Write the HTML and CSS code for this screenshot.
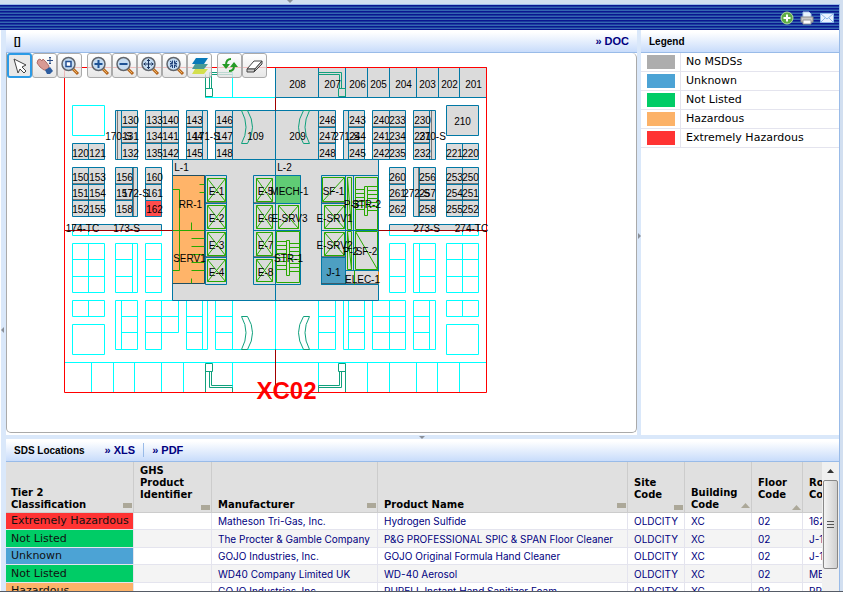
FILE: index.html
```html
<!DOCTYPE html>
<html lang="en">
<head>
<meta charset="utf-8">
<title>SDS Locations</title>
<meta name="viewport" content="width=device-width, initial-scale=1">
<link rel="stylesheet" href="styles.css">
</head>

<body>

<div class="app">
  <i class="handle handle--top"></i>
  <header class="banner">
    <button type="button" class="banner__btn" aria-label="Add">
      <svg width="14" height="14" viewBox="0 0 14 14"><circle cx="7" cy="7" r="6" fill="#5fae45" stroke="#b5dca4"/><path d="M7 3.500V10.500M3.500 7H10.500" stroke="#fff" stroke-width="2"/></svg>
    </button>
    <button type="button" class="banner__btn" aria-label="Print">
      <svg width="14" height="14" viewBox="0 0 14 14"><path d="M3 6V1H9L11 3V6" fill="#e8f2fd" stroke="#a8c8ea"/><path d="M1 6H13V11H1Z" fill="#c9c9c9" stroke="#8c8c8c"/><path d="M3 9H11V13H3Z" fill="#fff" stroke="#999"/></svg>
    </button>
    <button type="button" class="banner__btn" aria-label="Mail">
      <svg width="14" height="14" viewBox="0 0 14 14"><path d="M.5 2.500H13.500V11.500H.5Z" fill="#eaf3ff" stroke="#8db7ea"/><path d="M1 3L7 8L13 3M1 11L5 7M13 11L9 7" fill="none" stroke="#8db7ea"/></svg>
    </button>
  </header>

  <div class="body">
    <div class="gutter"><i class="handle handle--left"></i></div>

    <main class="content">
      <div class="upper">
        <section class="panel panel--map">
          <div class="panel__bar">
            <h2 class="panel__title">[]</h2>
            <a href="#doc" class="panel__link panel__link--end">» DOC</a>
          </div>
          <div class="map">
            <svg class="map__drawing" role="img" aria-label="Floor plan XC02">
              <g transform="translate(-6.500 -52.500)">
                <!-- open areas -->
                <path class="open" d="M72 105H104V135H72ZM205 97H275M232 72V97
                  M72 230V235H161V230M88 230V235M389 230V235H478V230M462 230V235
                  M72 243H104V292H72ZM88 243V292M72 259H104M72 276H104
                  M115 243H137V292H115ZM132 243V292M115 259H132M115 276H132
                  M145 243H161V292H145ZM145 259H161M145 276H161
                  M389 243H405V292H389ZM389 259H405M389 276H405
                  M413 243H435V292H413ZM419 243V292M419 259H435M419 276H435
                  M446 243H478V292H446ZM462 243V292M446 259H478M446 276H478
                  M72 300H104V316H72ZM88 300V316M72 324H104V354H72Z
                  M115 300H137V349H115ZM121 300V349M121 316H137M121 332H137
                  M145 300H178V332H145ZM161 300V349H145V332M145 316H178
                  M186 300H207V349H186ZM202 300V349M186 316H202M186 332H202
                  M178 300H186M215 300H335V349H318V300M215 300V349H318M232 300V349M215 316H232M215 332H232
                  M275 300V349M318 316H335M318 332H335
                  M343 300H364V349H343ZM348 300V349M348 316H364M348 332H364
                  M372 300H405V349H372ZM389 300V349M372 316H405M372 332H405
                  M413 300H435V349H413ZM429 300V349M413 316H429M413 332H429
                  M446 300H478V316H446ZM462 300V316M446 324H478V354H446Z
                  M64 362H486M91 362V392M113 362V392M134 362V392M161 362V392M183 362V392M232 362V392
                  M318 362V392M367 362V392M389 362V392M416 362V392M437 362V392M459 362V392"/>

                <!-- core and rooms -->
                <path class="room" d="M172 159H378V300H172Z"/>
                <path class="room" d="M275 67H486V97H275ZM318 67V97M345 67V97M367 67V97M389 67V97M416 67V97M438 67V97M459 67V97"/>
                <path class="room" d="M232 110H318V159H232ZM275 110V300M446 105H478V135H446Z
                  M72 143H104V159H72ZM88 143V159M446 143H478V159H446ZM462 143V159
                  M115 110H137V159H115ZM121 110V159M121 127H137M121 143H137
                  M145 110H178V159H145ZM161 110V159M145 127H178M145 143H178
                  M186 110H207V159H186ZM202 110V159M186 127H202M186 143H202
                  M215 110H232V159H215ZM215 127H232M215 143H232
                  M318 110H335V159H318ZM318 127H335M318 143H335
                  M343 110H364V159H343ZM348 110V159M348 127H364M348 143H364
                  M372 110H405V159H372ZM389 110V159M372 127H405M372 143H405
                  M413 110H435V159H413ZM429 110V159M413 127H429M413 143H429
                  M72 167H104V216H72ZM88 167V216M72 184H104M72 200H104
                  M115 167H137V216H115ZM132 167V216M115 184H132M115 200H132
                  M145 167H161V216H145ZM145 184H161M145 200H161
                  M389 167H405V216H389ZM389 184H405M389 200H405
                  M413 167H435V216H413ZM419 167V216M419 184H435M419 200H435
                  M446 167H478V216H446ZM462 167V216M446 184H478M446 200H478
                  M72 224H161V230H72ZM389 224H478V230H389Z"/>
                <path class="room room--red" d="M145 200H161V216H145Z"/>
                <path class="room room--orange" d="M172 175H204V283H172Z"/>
                <path class="room" d="M205 175H226V284H205ZM205 203H226M205 230H226M205 257H226
                  M253 175H275V284H253ZM253 203H275M253 230H275M253 257H275
                  M275 175H300V284H275ZM321 175H378V284H321ZM275 203H300M275 230H300
                  M345 175V284M353 175V270M321 203H345M321 230H378M321 257H345M345 270H378"/>
                <path class="room room--green" d="M275 175H300V203H275Z"/>
                <path class="room room--blue" d="M321 257H345V284H321Z"/>
                <path class="shade" d="M72 183H104M72 199H104M145 183H161M115 183H132M115 199H132M121 126H137M121 142H137M145 126H178M145 142H178M186 126H202M186 142H202M215 126H232M215 142H232M318 126H335M318 142H335M348 126H364M348 142H364M372 126H405M372 142H405M413 126H429M413 142H429M389 183H405M389 199H405M419 183H435M419 199H435M446 183H478M446 199H478M204 175V283M172 175H204M172 283H204M205 202H226M253 202H275M205 256H226M253 256H275M321 202H345M321 256H345M321 283H378M431 110V159M133 167V216M117 110V159M418 167V216"/>

                <!-- lifts, stairs and fixtures -->
                <path class="fixture" d="M207 178H225V201H207ZL225 201M225 178L207 201
                  M207 205H225V228H207ZL225 228M225 205L207 228
                  M207 232H225V255H207ZL225 255M225 232L207 255
                  M207 259H225V281H207ZL225 281M225 259L207 281
                  M256 178H272V201H256ZL272 201M272 178L256 201
                  M256 205H272V228H256ZL272 228M272 205L256 228
                  M256 232H272V255H256ZL272 255M272 232L256 255
                  M256 259H272V281H256ZL272 281M272 259L256 281
                  M278 205H298V228H278ZL298 228M298 205L278 228
                  M324 205H344V228H324ZL344 228M344 205L324 228
                  M324 232H344V255H324ZL344 255M344 232L324 255
                  M322 177H344V201H322ZM344 177L322 201
                  M276 231H299V282H276ZM286 240H289V275H286ZM276 241H286M276 245H286M276 249H286M276 253H286M276 257H286M276 261H286M276 265H286M276 269H286
                  M289 243H299M289 247H299M289 251H299M289 255H299M289 259H299M289 263H299M289 267H299M289 271H299
                  M355 177H377V229H355ZM364 186H367V215H364ZM355 189H364M355 193H364M355 197H364M355 201H364M355 205H364M355 209H364
                  M367 186H377M367 190H377M367 194H377M367 198H377M367 202H377M367 206H377M367 210H377
                  M355 231H377V269H355ZL377 269M347 177H351V229H347ZL351 229M347 231H351V269H347ZL351 269M354 270V284
                  M172 189H179V270H172M172 230H204M204 184H199M204 192H199M191 222V230M191 238H204M191 246H204M191 254H204M191 262H204M191 270H204M191 278V283"/>
                <path class="door" d="M205 74V97M205 88H212V96H205M209 88V72H232M211 88V74H232
                  M318 72H341V88M318 74H339V88M338 88H345V96H338Z
                  M205 392V363H212V371H205M209 371V387H232V392M211 371V385H232
                  M345 392V363H338V371H345M339 371V385H318V392M341 371V387H318
                  M241 110Q250 127 241 143H247Q257 127 247 110ZM309 110Q300 127 309 143H303Q293 127 303 110Z
                  M241 316Q250 332 241 349H247Q257 332 247 316ZM309 316Q300 332 309 349H303Q293 332 303 316Z"/>
                <path class="axis" d="M64 230H172M378 230H486M275 97V110M275 349V392"/>
                <path class="outline" d="M64 67H486V392H64Z"/>
                <path class="exit" d="M378 271V283"/>

                <!-- labels -->
                <g class="label">
                  <text x="297" y="87">208</text><text x="332" y="87">207</text><text x="357" y="87">206</text><text x="378" y="87">205</text><text x="403" y="87">204</text><text x="427" y="87">203</text><text x="449" y="87">202</text><text x="473" y="87">201</text>
                  <text x="130" y="123">130</text><text x="154" y="123">133</text><text x="170" y="123">140</text><text x="194" y="123">143</text><text x="224" y="123">146</text><text x="327" y="123">246</text><text x="357" y="123">243</text><text x="381" y="123">240</text><text x="397" y="123">233</text><text x="422" y="123">230</text><text x="462" y="124">210</text>
                  <text x="118" y="139">170-S</text><text x="130" y="139">131</text><text x="154" y="139">134</text><text x="170" y="139">141</text><text x="194" y="139">144</text><text x="206" y="139">171-S</text><text x="224" y="139">147</text><text x="255" y="139">109</text><text x="297" y="139">209</text><text x="327" y="139">247</text><text x="346" y="139">271-S</text><text x="357" y="139">244</text><text x="381" y="139">241</text><text x="397" y="139">234</text><text x="422" y="139">231</text><text x="432" y="139">270-S</text>
                  <text x="80" y="156">120</text><text x="97" y="156">121</text><text x="130" y="156">132</text><text x="154" y="156">135</text><text x="170" y="156">142</text><text x="194" y="156">145</text><text x="224" y="156">148</text><text x="327" y="156">248</text><text x="357" y="156">245</text><text x="381" y="156">242</text><text x="397" y="156">235</text><text x="422" y="156">232</text><text x="454" y="156">221</text><text x="470" y="156">220</text>
                  <text x="181" y="170">L-1</text><text x="284" y="170">L-2</text>
                  <text x="80" y="180">150</text><text x="97" y="180">153</text><text x="124" y="180">156</text><text x="154" y="180">160</text><text x="397" y="180">260</text><text x="427" y="180">256</text><text x="454" y="180">253</text><text x="470" y="180">250</text>
                  <text x="80" y="196">151</text><text x="97" y="196">154</text><text x="124" y="196">157</text><text x="135" y="196">172-S</text><text x="154" y="196">161</text><text x="397" y="196">261</text><text x="416" y="196">272-S</text><text x="427" y="196">257</text><text x="454" y="196">254</text><text x="470" y="196">251</text>
                  <text x="80" y="212">152</text><text x="97" y="212">155</text><text x="124" y="212">158</text><text x="154" y="212">162</text><text x="397" y="212">262</text><text x="427" y="212">258</text><text x="454" y="212">255</text><text x="470" y="212">252</text>
                  <text x="82" y="231">174-TC</text><text x="126" y="231">173-S</text><text x="426" y="231">273-S</text><text x="471" y="231">274-TC</text>
                  <text x="216" y="194">E-1</text><text x="265" y="194">E-5</text><text x="289" y="194">MECH-1</text><text x="333" y="194">SF-1</text>
                  <text x="190" y="207">RR-1</text><text x="351" y="207">P-3</text><text x="366" y="207">STR-2</text>
                  <text x="216" y="221">E-2</text><text x="265" y="221">E-6</text><text x="289" y="221">E-SRV3</text><text x="334" y="221">E-SRV1</text>
                  <text x="216" y="248">E-3</text><text x="265" y="248">E-7</text><text x="334" y="248">E-SRV2</text><text x="350" y="254">P-2</text><text x="366" y="254">SF-2</text>
                  <text x="189" y="261">SERV1</text><text x="288" y="261">STR-1</text>
                  <text x="216" y="275">E-4</text><text x="265" y="275">E-8</text><text x="333" y="275">J-1</text><text x="362" y="282">ELEC-1</text>
                </g>
                <text class="floor" x="286" y="398">XC02</text>
              </g>
            </svg>

            <div class="tools">
              <div class="tools__group">
                <button type="button" class="tool tool--on" aria-label="Select"><svg viewBox="0 0 20 20"><path d="M4 3L16 9L12 11L16 15L14 17L10 13L8 17Z" fill="#fff" stroke="#444"/></svg></button>
                <button type="button" class="tool" aria-label="Pan"><svg viewBox="0 0 20 20"><path d="M3 4L5 3L7 5L8 3L10 5L11 6L14 10L13 14L9 14L5 11L2 7Z" fill="#d99a94" stroke="#b06e68"/><path d="M10 14L15 11L18 15L15 18H12Z" fill="#2d5d9f"/><path d="M15 1V8M12 4.500H18M14 2L15 1L16 2M14 7L15 8L16 7" fill="none" stroke="#2b4c83"/></svg></button>
                <button type="button" class="tool" aria-label="Zoom window"><svg viewBox="0 0 20 20"><use href="#lens"/><path d="M6 5.500H11V10.500H6Z" fill="#fff" stroke="#204d91" stroke-width="1.500"/></svg></button>
              </div>
              <div class="tools__group">
                <button type="button" class="tool" aria-label="Zoom in"><svg viewBox="0 0 20 20"><use href="#lens"/><path d="M8.500 4V12M4.500 8H12.500" stroke="#1d5295" stroke-width="2"/></svg></button>
                <button type="button" class="tool" aria-label="Zoom out"><svg viewBox="0 0 20 20"><use href="#lens"/><path d="M4.500 8H12.500" stroke="#1d5295" stroke-width="2"/></svg></button>
                <button type="button" class="tool" aria-label="Zoom extents"><svg viewBox="0 0 20 20"><use href="#lens"/><path d="M8.500 3V13M3.500 8H13.500M7 5L8.500 3.500L10 5M7 11L8.500 12.500L10 11M5.500 6.500L4 8L5.500 9.500M11.500 6.500L13 8L11.500 9.500" fill="none" stroke="#1c355e"/></svg></button>
                <button type="button" class="tool" aria-label="Zoom to selection"><svg viewBox="0 0 20 20"><use href="#lens"/><path d="M5 5L7.500 7M12 5L9.500 7M5 11L7.500 9M12 11L9.500 9M5 7.500H7.500V4.500M12 7.500H9.500V4.500M5 9H7.500V12M12 9H9.500V12" fill="none" stroke="#1d3f78"/></svg></button>
                <button type="button" class="tool" aria-label="Layers"><svg viewBox="0 0 20 20"><path d="M2 18L5 13H18L14 18Z" fill="#d3df4e"/><path d="M2 13L5 8H18L14 13Z" fill="#4a9a94"/><path d="M2 8L6 2H18L14 8Z" fill="#0879b9"/></svg></button>
              </div>
              <div class="tools__group">
                <button type="button" class="tool" aria-label="Refresh"><svg viewBox="0 0 20 20"><path d="M11 3C7 3 6 6 6 9M9 15C13 15 14 12 14 10" fill="none" stroke="#279b27" stroke-width="2"/><path d="M2 8H10L6 13ZM10 11H18L14 6Z" fill="#279b27"/></svg></button>
                <button type="button" class="tool" aria-label="Clear"><svg viewBox="0 0 20 20"><path d="M2 13L9 5H17L10 13Z" fill="#fff" stroke="#444"/><path d="M2 13V16H9L17 8V5L10 13ZM10 13L9 16" fill="#ccc" stroke="#444"/></svg></button>
              </div>
            </div>
          </div>
        </section>

        <div class="splitter"><i class="handle handle--right"></i></div>

        <section class="panel panel--legend">
          <div class="panel__bar">
            <h2 class="panel__title">Legend</h2>
          </div>
          <ul class="legend">
            <li class="legend__item"><i class="swatch bg-none"></i><span>No MSDSs</span></li>
            <li class="legend__item"><i class="swatch bg-unknown"></i><span>Unknown</span></li>
            <li class="legend__item"><i class="swatch bg-safe"></i><span>Not Listed</span></li>
            <li class="legend__item"><i class="swatch bg-hazard"></i><span>Hazardous</span></li>
            <li class="legend__item"><i class="swatch bg-extreme"></i><span>Extremely Hazardous</span></li>
          </ul>
        </section>
      </div>

      <div class="divider"><i class="handle handle--down"></i></div>

      <section class="panel panel--list">
        <div class="panel__bar">
          <h2 class="panel__title">SDS Locations</h2>
          <a href="#xls" class="panel__link">» XLS</a>
          <a href="#pdf" class="panel__link panel__link--line">» PDF</a>
        </div>
        <div class="list">
          <div class="list__view">
            <table class="grid">
              <colgroup><col class="w-tier"><col class="w-ghs"><col class="w-maker"><col class="w-product"><col class="w-site"><col class="w-building"><col class="w-floor"><col class="w-room"></colgroup>
              <thead>
                <tr>
                  <th scope="col"><div class="head head--first"><span>Tier 2<br>Classification</span><i class="sort"></i></div></th>
                  <th scope="col"><div class="head head--tall"><span>GHS<br>Product<br>Identifier</span><i class="sort"></i></div></th>
                  <th scope="col"><div class="head">Manufacturer<i class="sort"></i></div></th>
                  <th scope="col"><div class="head">Product Name<i class="sort"></i></div></th>
                  <th scope="col"><div class="head head--tall"><span>Site<br>Code</span><i class="sort"></i></div></th>
                  <th scope="col"><div class="head"><span>Building<br>Code</span><i class="sort sort--up"></i></div></th>
                  <th scope="col"><div class="head head--tall"><span>Floor<br>Code</span><i class="sort sort--up"></i></div></th>
                  <th scope="col"><div class="head head--tall"><span>Room<br>Code</span><i class="sort sort--up"></i></div></th>
                </tr>
              </thead>
              <tbody>
                <tr><td class="tier bg-extreme">Extremely Hazardous</td><td></td><td>Matheson Tri-Gas, Inc.</td><td>Hydrogen Sulfide</td><td>OLDCITY</td><td>XC</td><td>02</td><td>162</td></tr>
                <tr><td class="tier bg-safe">Not Listed</td><td></td><td>The Procter &amp; Gamble Company</td><td>P&amp;G PROFESSIONAL SPIC &amp; SPAN Floor Cleaner</td><td>OLDCITY</td><td>XC</td><td>02</td><td>J-1</td></tr>
                <tr><td class="tier bg-unknown">Unknown</td><td></td><td>GOJO Industries, Inc.</td><td>GOJO Original Formula Hand Cleaner</td><td>OLDCITY</td><td>XC</td><td>02</td><td>J-1</td></tr>
                <tr><td class="tier bg-safe">Not Listed</td><td></td><td>WD40 Company Limited UK</td><td>WD-40 Aerosol</td><td>OLDCITY</td><td>XC</td><td>02</td><td>MECH-1</td></tr>
                <tr><td class="tier bg-hazard">Hazardous</td><td></td><td>GOJO Industries, Inc.</td><td>PURELL Instant Hand Sanitizer Foam</td><td>OLDCITY</td><td>XC</td><td>02</td><td>RR-1</td></tr>
              </tbody>
            </table>
          </div>
          <div class="scroll">
            <button type="button" class="scroll__up" aria-label="Scroll up"></button>
            <div class="scroll__thumb"></div>
          </div>
        </div>
      </section>
    </main>
  </div>
</div>

<svg class="defs" aria-hidden="true">
  <g id="lens">
    <path d="M12 12L18 18" stroke="#b5651d" stroke-width="3"/>
    <path d="M12 12L17 17" stroke="#f2b45c"/>
    <circle cx="8.500" cy="8" r="6.500" fill="#c5dcf2" stroke="#62666c" stroke-width="1.500"/>
  </g>
</svg>

</body>

</html>
```
FILE: styles.css
```css
/* reset */
body,h2,ul,p{margin:0;padding:0}
ul{list-style:none}
h2{font-size:100%;font-weight:400}
button{border:0;padding:0;background:none;font:inherit;cursor:pointer}
*{box-sizing:border-box}
svg{display:block}

:root {
  --frame:#d2dff0;
  --splitter:#dae8fa;
  --line:#99bbe8;
  --grid-line:#e4e4ee;
  --link:#000080;
}

/* page */
html,body{height:100%;font-family:"Liberation Sans",Arial,sans-serif;font-size:10px;color:#000;}
.defs{position:absolute;width:0;height:0;}
.app{position:relative;display:flex;flex-direction:column;height:100vh;overflow:hidden;padding:4px 3px 0 0;background-color:var(--frame);border-bottom:1px solid #555b66;}

.banner{display:flex;flex:none;justify-content:flex-end;align-items:center;gap:6px;height:26px;padding:0 5px;border-top:1px solid var(--line);border-right:1px solid var(--line);background:repeating-linear-gradient(#0a1690 0,#0a1690 1px,#1c3c9e 1px,#1c3c9e 2px,#3467b2 2px,#3467b2 3px);}
.banner__btn{width:14px;height:14px;}

.body{display:flex;flex:1;min-height:0;border-right:1px solid var(--line);}
.gutter{position:relative;flex:none;width:6px;background-color:var(--splitter);border-left:1px solid #fff;}
.content{display:flex;flex:1;flex-direction:column;min-width:0;}
.upper{display:flex;flex:1;min-height:0;}
.splitter{position:relative;flex:none;width:4px;background-color:var(--splitter);}
.divider{position:relative;flex:none;height:4px;background-color:var(--splitter);}

/* splitter handles */
.handle{position:absolute;border:3px solid transparent;}
.handle--top{left:34%;top:0;border-top-color:#8a9099;}
.handle--left{left:-3px;top:53%;border-right-color:#8a9099;}
.handle--right{left:1px;top:50%;border-left-color:#8a9099;}
.handle--down{left:calc(50% - 4px);top:1px;border-top-color:#8a9099;}

/* panels */
.panel{display:flex;flex-direction:column;min-width:0;background-color:#fff;}
.panel--map{flex:1;padding-bottom:2px;}
.panel--legend{flex:none;width:198px;}
.panel--list{flex:none;height:152px;}
.panel__bar{display:flex;flex:none;align-items:center;height:23px;padding:0 8px;border-bottom:1px solid var(--line);background:linear-gradient(#fff 10%,#c8dcfb);}
.panel__title{font-weight:700;}
.panel__link{margin-left:20px;color:var(--link);font-weight:700;font-size:11px;text-decoration:none;}
.panel__link--end{margin-left:auto;}
.panel__link--line{margin-left:8px;padding:1px 8px;border-left:1px solid var(--line);}

/* map */
.map{position:relative;flex:1;min-height:0;overflow:hidden;border:1px solid #aaa;border-width:0 1px 1px;border-radius:0 5px 5px 5px;}
.map__drawing{width:100%;height:100%;}
.map__drawing path{fill:none;stroke-width:1;}
.map__drawing .open{stroke:#0ff;}
.map__drawing .room{fill:#dbdbdb;stroke:#0078a5;}
.map__drawing .room--red{fill:#ff4d4d;}
.map__drawing .room--orange{fill:#ffb469;}
.map__drawing .room--green{fill:#60cc75;}
.map__drawing .room--blue{fill:#4d9fc2;}
.map__drawing .shade{stroke:#333;stroke-opacity:.6;}
.map__drawing .fixture{stroke:#28a800;}
.map__drawing .door{stroke:#10a07c;}
.map__drawing .axis{stroke:#a00000;}
.map__drawing .outline{stroke:red;}
.map__drawing .exit{stroke:#ff8c00;}
.label{font-size:10px;text-anchor:middle;}
.floor{font-size:24px;font-weight:700;text-anchor:middle;fill:red;}

.tools{position:absolute;left:0;top:0;display:flex;gap:5px;}
.tools__group{display:flex;}
.tool{display:grid;place-items:center;width:25px;height:25px;border:1px solid #aaa;border-radius:3px;background:linear-gradient(rgba(255,255,255,.8),rgba(225,225,225,.8));}
.tool svg{width:20px;height:20px;}
.tool--on{border:2px solid #2c9be6;background:#e9e9e9;}

/* legend */
.legend{font-family:"DejaVu Sans",Verdana,sans-serif;font-size:11px;}
.legend__item{display:flex;align-items:center;height:19px;border-bottom:1px solid var(--grid-line);}
.swatch{width:28px;height:14px;margin:0 5px 0 6px;}
.legend__item span{padding-left:5px;border-left:1px solid var(--grid-line);line-height:18px;}

.bg-none{background-color:#adadad;}
.bg-unknown{background-color:#4ca3d5;}
.bg-safe{background-color:#0c6;}
.bg-hazard{background-color:#fcb268;}
.bg-extreme{background-color:#f33;}

/* list */
.list{display:flex;flex:1;min-height:0;}
.list__view{flex:1;min-width:0;overflow:hidden;}
.grid{width:860px;table-layout:fixed;border-collapse:separate;border-spacing:0;}
.grid th{height:51px;padding:0;background-color:#e0e0e0;border-right:1px solid #ccc;border-bottom:1px solid #ccc;text-align:left;vertical-align:bottom;font:700 10px/12px "DejaVu Sans",Verdana,sans-serif;}
.head{display:flex;justify-content:space-between;align-items:flex-end;padding:0 1px 1px 6px;}
.head--first{padding-left:5px;}
.head--tall{padding-bottom:11px;}
.sort{flex:none;width:9px;height:5px;margin-bottom:3px;background-color:#aca899;}
.head--tall .sort{margin-bottom:-9px;}
.sort--up{clip-path:polygon(50% 0,100% 100%,0 100%);}
.grid td{height:17px;padding:0 6px;border-right:1px solid var(--grid-line);border-bottom:1px solid var(--grid-line);overflow:hidden;white-space:nowrap;color:var(--link);font:10px/16px Inter,Arial,sans-serif;}
.grid tr:nth-child(even) td{height:18px;}
.grid tr:nth-child(even) td:not(.tier){background-color:#f4f4f4;}
.grid .tier{padding:0 5px;color:#111;font:11px/16px "DejaVu Sans",Verdana,sans-serif;}

.w-tier{width:128px;}
.w-ghs{width:78px;}
.w-maker{width:166px;}
.w-product{width:250px;}
.w-site{width:57px;}
.w-building{width:67px;}
.w-floor{width:51px;}

.scroll{flex:none;width:17px;background-color:#f0f0f0;}
.scroll__up{display:block;width:17px;height:18px;}
.scroll__up::after{content:"";display:block;margin:0 auto;width:7px;height:4px;background-color:#333;clip-path:polygon(50% 0,100% 100%,0 100%);}
.scroll__thumb{display:grid;place-items:center;width:15px;height:89px;margin:0 1px;border:1px solid #888;border-radius:2px;background:linear-gradient(90deg,#f4f4f4,#cfcfcf);}
.scroll__thumb::after{content:"";width:7px;height:8px;background:repeating-linear-gradient(#555 0,#555 1px,transparent 1px,transparent 3px);}
```
